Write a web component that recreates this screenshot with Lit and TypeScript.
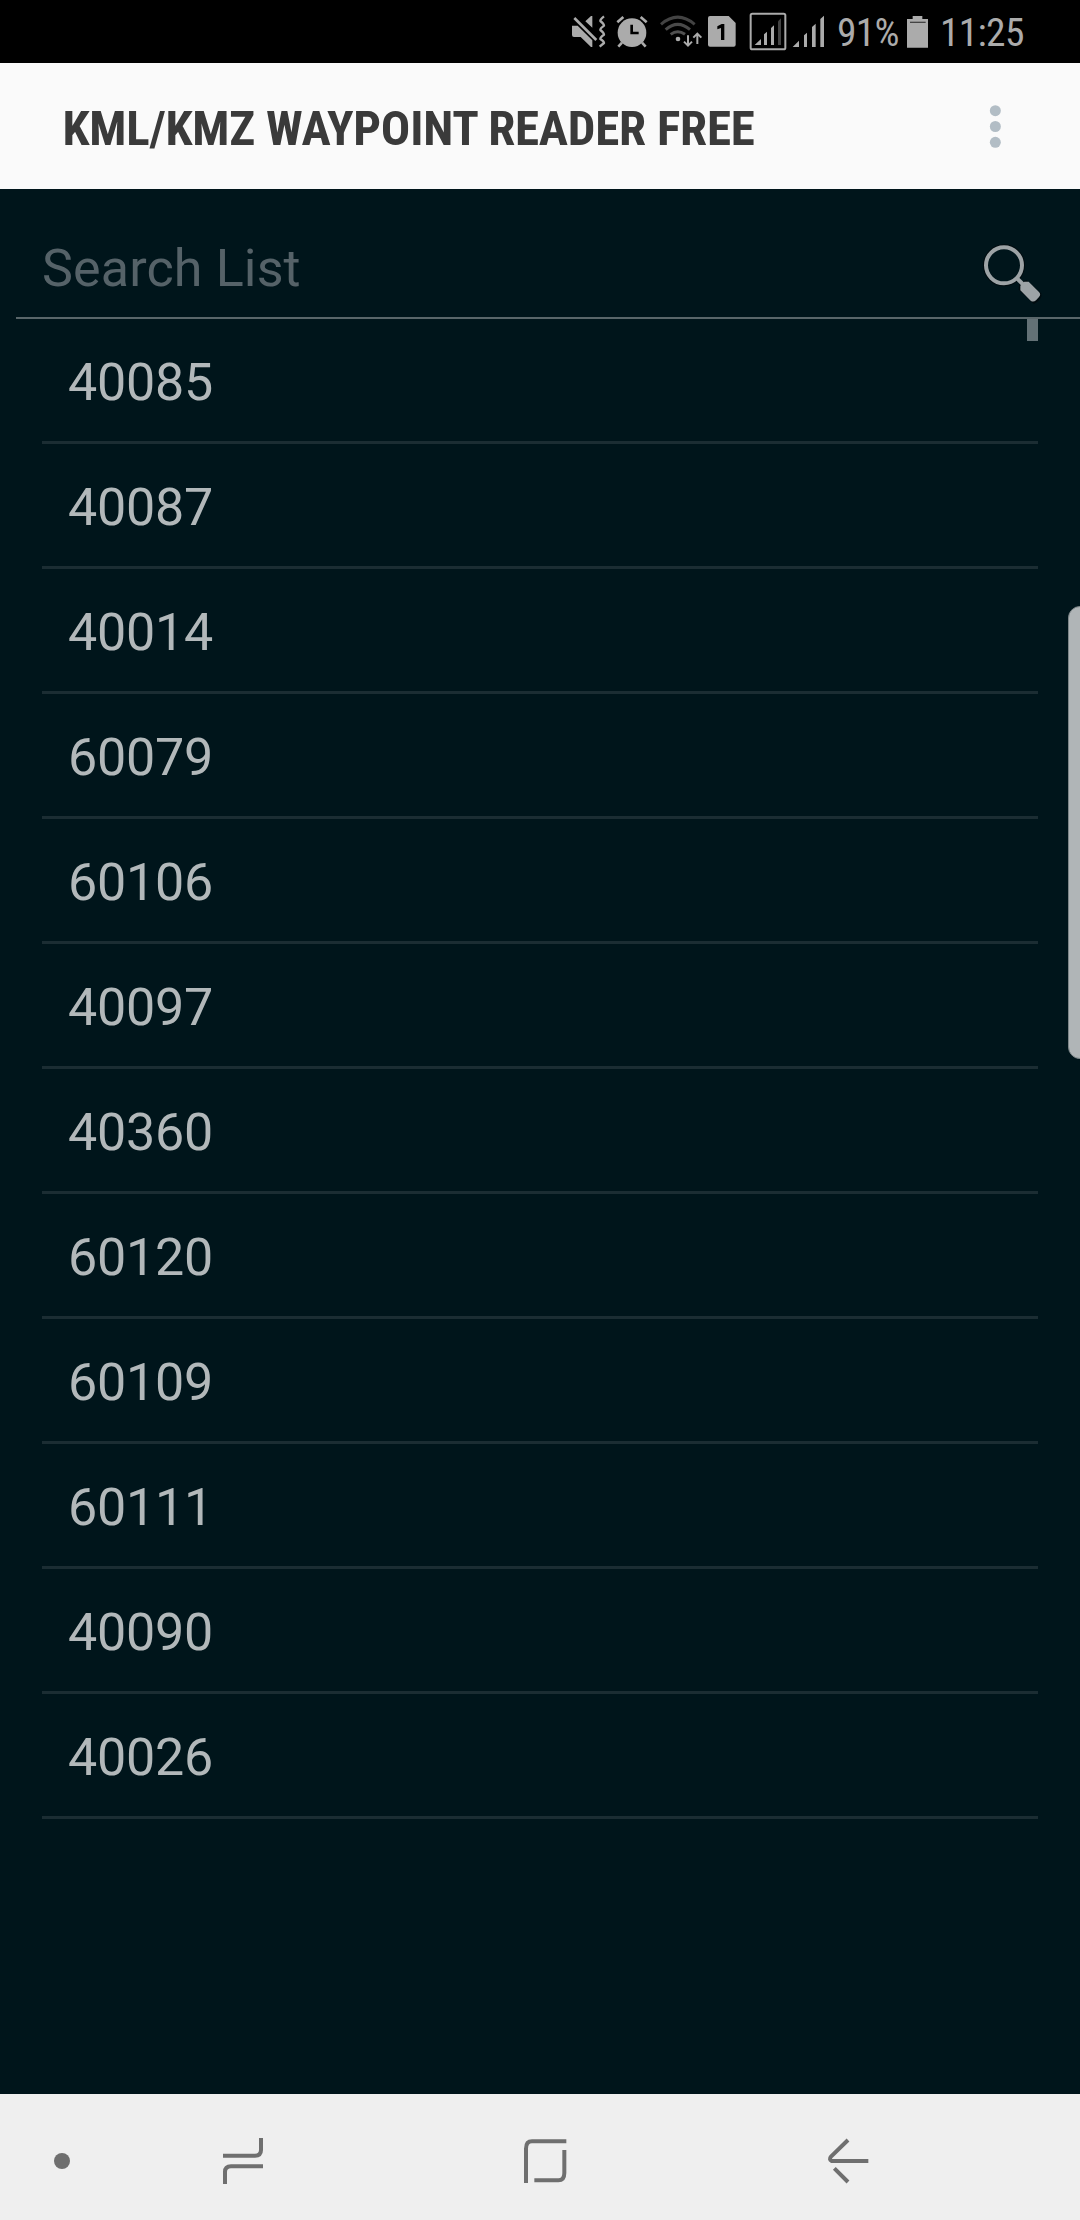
import { LitElement, html, css, svg } from "lit";
import { customElement } from "lit/decorators.js";

/* Glyphs are drawn on a grid of three units per CSS pixel. */
const glyph = (x: number, y: number, w: number, h: number, body: unknown) =>
  html`<svg width=${w / 3} height=${h / 3} viewBox="${x} ${y} ${w} ${h}" aria-hidden="true">${body}</svg>`;

const muteIcon = glyph(30, 0, 126, 189, svg`
  <path fill="#ababab" d="M36 77H53L97 121V141H93L62 111H42Q36 111 36 105ZM76 64L93 48H97V83Z"/>
  <path stroke="#ababab" stroke-width="8" d="M43 54L109 120"/>
  <path fill="none" stroke="#ababab" stroke-width="7" stroke-linejoin="round" d="M132 49Q120 58 121 63Q132 72 132 77Q120 86 121 90Q132 99 132 104Q120 112 121 117Q132 124 132 129L119 140"/>`);

const alarmIcon = glyph(156, 0, 132, 189, svg`
  <circle cx="216" cy="98" r="43" fill="#ababab"/>
  <path fill="none" stroke="#ababab" stroke-width="8" d="M172 67L190 51M260 67L242 51M186 128L175 140M246 128L257 140"/>
  <path fill="none" stroke="#000" stroke-width="8" d="M215 74V99H236"/>`);

const wifiIcon = glyph(288, 0, 144, 189, svg`
  <g fill="none" stroke-width="9">
    <path stroke="#434343" d="M303 73Q353 30 404 73"/>
    <path stroke="#4a4a4a" d="M317 89Q353 57 390 89"/>
    <path stroke="#505050" d="M332 103Q353 87 375 103"/>
  </g>
  <circle cx="354" cy="117" r="7" fill="#ababab"/>
  <path fill="none" stroke="#ababab" stroke-width="6" d="M384 106V136M372 125L384 137L396 125M412 132V101M400 113L412 101L424 113"/>`);

const simIcon = glyph(432, 0, 120, 189, svg`
  <path fill="#ababab" d="M450 48H506L527 69V134Q527 140 521 140H450Q444 140 444 134V54Q444 48 450 48Z"/>
  <path fill="#000" d="M485 72H493V120H483V84L472 88V79Z"/>`);

const signalBoxIcon = glyph(552, 0, 138, 189, svg`
  <rect x="572" y="41" width="104" height="107" rx="5" fill="none" stroke="#ababab" stroke-width="6"/>
  <path fill="#ababab" d="M584 135L603 117V135ZM612 103L621 95V135H612ZM633 84L642 76V135H633Z"/>
  <path fill="#434343" d="M654 64L663 55V135H654Z"/>`);

const signalIcon = glyph(690, 0, 120, 189, svg`
  <path fill="#ababab" d="M698 141L717 122V141ZM732 106L741 98V141H732ZM756 81L767 71V141H756ZM781 57L792 47V141H781Z"/>`);

const batteryIcon = glyph(285, 0, 75, 189, svg`
  <path fill="#ababab" d="M308 48H337V57H354V143H291V57H308Z"/>
  <path stroke="#444" stroke-width="4" d="M300 67H347"/>`);

const searchIcon = glyph(240, 90, 195, 201, svg`
  <g stroke="#000b0f" stroke-width="8" fill="none">
    <circle cx="312" cy="166" r="59"/>
    <path d="M362 222L378 215L420 252Q424 264 402 277L360 237Z"/>
  </g>
  <circle cx="312" cy="166" r="54" fill="none" stroke="#9da3a6" stroke-width="12"/>
  <path stroke="#9da3a6" stroke-width="12" d="M349 203L371 225"/>
  <path fill="#9da3a6" d="M361 227L373 215H386L417 246Q424 254 417 261L408 271Q400 278 392 272L361 241Z"/>`);

const menuIcon = glyph(1290, 120, 66, 159, svg`
  <g fill="#b2bdc5"><circle cx="1324" cy="152" r="16.500"/><circle cx="1324" cy="199.500" r="16.500"/><circle cx="1324" cy="247" r="16.500"/></g>`);

const dotIcon = glyph(150, 201, 72, 144, svg`<circle cx="186" cy="273" r="24" fill="#6f6f6f"/>`);

const recentsIcon = glyph(660, 201, 138, 144, svg`
  <path fill="none" stroke="#6f6f6f" stroke-width="12" d="M669 257H765Q783 257 783 240V204M789 289H693Q675 289 675 306V342"/>`);

const homeIcon = glyph(123, 201, 144, 144, svg`
  <path fill="none" stroke="#6f6f6f" stroke-width="12" d="M138 339V236Q138 214 156 214H259M253 240V309Q253 331 235 331H163"/>`);

const backIcon = glyph(1035, 201, 138, 144, svg`
  <path fill="none" stroke="#6f6f6f" stroke-width="12" d="M1104 210L1053 260Q1046 268 1055 273H1165M1063 295L1104 336"/>`);

@customElement("app-root")
export class AppRoot extends LitElement {
  static styles = css`
    :host {
      display: flex;
      flex-direction: column;
      position: relative;
      width: 1080px;
      height: 2220px;
      overflow: hidden;
      background: #00151b;
      font-family: Roboto, "Liberation Sans", sans-serif;
    }
    svg { display: block; flex: none; }
    .status {
      display: flex;
      flex: none;
      height: 63px;
      padding-left: 570px;
      background: #000;
      color: #ababab;
    }
    .condensed {
      font-family: "Roboto Condensed", Roboto, sans-serif;
      font-stretch: 75%;
      white-space: nowrap;
    }
    .percent, .clock { font-size: 39.5px; line-height: 66px; letter-spacing: -0.7px; }
    .percent { width: 68px; margin-left: 7px; }
    .clock { margin-left: 10px; }
    .header {
      display: flex;
      flex: none;
      align-items: center;
      justify-content: space-between;
      height: 126px;
      padding: 0 74px 0 62.5px;
      box-sizing: border-box;
      background: #fafafa;
    }
    .title { margin: 0; font-size: 49px; font-weight: 700; line-height: 126px; letter-spacing: -0.25px; color: #3a3a3a; padding-top: 6px; }
    .search {
      display: flex;
      flex: none;
      justify-content: space-between;
      height: 130px;
      margin-left: 16px;
      padding: 51px 35px 0 26px;
      box-sizing: border-box;
      border-bottom: 2px solid #59666a;
    }
    .hint { padding-top: 1px; font-size: 52px; line-height: 56px; letter-spacing: 0.15px; color: #556268; }
    .list { flex: 1; margin: 0; padding: 0 42px; list-style: none; }
    .row {
      height: 125px;
      padding: 3px 0 0 26px;
      box-sizing: border-box;
      border-bottom: 3px solid #1b2d33;
      font-size: 52px;
      line-height: 122px;
      letter-spacing: -0.2px;
      color: #b2b8ba;
    }
    .thumb { position: absolute; left: 1027px; top: 319px; width: 11px; height: 22px; background: #637176; }
    .edge {
      position: absolute;
      left: 1068px;
      top: 606px;
      width: 24px;
      height: 453px;
      box-sizing: border-box;
      border: 1px solid #7d8588;
      border-radius: 18px;
      background: #b0b5b7;
    }
    .nav { display: flex; flex: none; align-items: center; height: 126px; background: #efefef; }
    .nav svg { margin-top: 8px; }
    .dot { margin-left: 50px; }
    .recents { margin-left: 146px; }
    .home { margin-left: 255px; }
    .back { margin-left: 256px; }
  `;

  private waypoints = ["40085", "40087", "40014", "60079", "60106", "40097", "40360", "60120", "60109", "60111", "40090", "40026"];

  render() {
    return html`
      <div class="status">
        ${muteIcon}${alarmIcon}${wifiIcon}${simIcon}${signalBoxIcon}${signalIcon}
        <span class="percent condensed">91%</span>${batteryIcon}<span class="clock condensed">11:25</span>
      </div>
      <header class="header">
        <h1 class="title condensed">KML/KMZ WAYPOINT READER FREE</h1>
        ${menuIcon}
      </header>
      <div class="search"><span class="hint">Search List</span>${searchIcon}</div>
      <ul class="list">${this.waypoints.map((id) => html`<li class="row">${id}</li>`)}</ul>
      <div class="thumb"></div>
      <div class="edge"></div>
      <nav class="nav">
        <div class="dot">${dotIcon}</div>
        <div class="recents">${recentsIcon}</div>
        <div class="home">${homeIcon}</div>
        <div class="back">${backIcon}</div>
      </nav>
    `;
  }
}
